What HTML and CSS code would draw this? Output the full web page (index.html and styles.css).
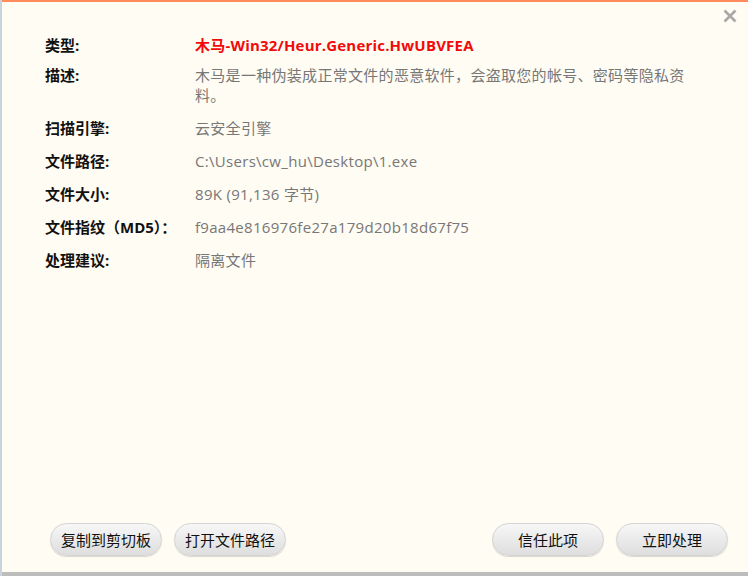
FILE: index.html
```html
<!DOCTYPE html>
<html lang="zh-CN">
<head>
    <meta charset="UTF-8">
    <title>病毒详情</title>
    <link rel="stylesheet" href="styles.css">
</head>
<body>
    <div class="dialog">
        <div class="titlebar">
            <svg class="close" width="14" height="14" viewBox="0 0 14 14">
                <path d="M1.5 1.5 L12.5 12.5 M12.5 1.5 L1.5 12.5" stroke="#a8a8a8" stroke-width="2.6" fill="none"/>
            </svg>
        </div>

        <!-- 详情列表 -->
        <div class="details">
            <div class="item first">
                <div class="label">类型:</div>
                <div class="value danger">木马-Win32/Heur.Generic.HwUBVFEA</div>
            </div>
            <div class="item desc">
                <div class="label">描述:</div>
                <div class="value">木马是一种伪装成正常文件的恶意软件，会盗取您的帐号、密码等隐私资料。</div>
            </div>
            <div class="item">
                <div class="label">扫描引擎:</div>
                <div class="value">云安全引擎</div>
            </div>
            <div class="item">
                <div class="label">文件路径:</div>
                <div class="value">C:\Users\cw_hu\Desktop\1.exe</div>
            </div>
            <div class="item">
                <div class="label">文件大小:</div>
                <div class="value">89K (91,136 字节)</div>
            </div>
            <div class="item">
                <div class="label">文件指纹（MD5）：</div>
                <div class="value">f9aa4e816976fe27a179d20b18d67f75</div>
            </div>
            <div class="item">
                <div class="label">处理建议:</div>
                <div class="value">隔离文件</div>
            </div>
        </div>

        <!-- 底部按钮 -->
        <div class="footer">
            <div class="group">
                <button>复制到剪切板</button>
                <button>打开文件路径</button>
            </div>
            <div class="group">
                <button>信任此项</button>
                <button>立即处理</button>
            </div>
        </div>
    </div>
</body>
</html>
```

FILE: styles.css
```css
html, body {
    margin: 0;
    padding: 0;
}

body {
    width: 748px;
    height: 576px;
    background: #c9d3dd;
    font-family: "Open Sans", "Noto Sans CJK SC", sans-serif;
    overflow: hidden;
}

.dialog {
    box-sizing: border-box;
    margin-left: 2px;
    width: 746px;
    height: 572px;
    background: #fffcf3;
    border-top: 2px solid #ff8a5c;
    display: flex;
    flex-direction: column;
    box-shadow: 0 4px 0 #bdbdbd;
}

.titlebar {
    height: 24px;
    display: flex;
    justify-content: flex-end;
    align-items: flex-start;
    padding: 7px 11px 0 0;
    box-sizing: border-box;
}

.details {
    padding: 9px 0 0 43px;
    flex: 1;
}

.item {
    display: flex;
    margin-top: 13px;
    font-size: 15px;
    line-height: 20px;
}

.item.first {
    margin-top: 0;
}

.item.desc {
    margin-top: 10px;
}

.label {
    width: 150px;
    flex-shrink: 0;
    color: #111;
    font-weight: bold;
}

.value {
    width: 496px;
    color: #777;
    letter-spacing: 0.3px;
}

.value.danger {
    color: #f20a0a;
    font-weight: bold;
    letter-spacing: 0.2px;
}

.footer {
    display: flex;
    justify-content: space-between;
    padding: 0 20px 16px 48px;
}

.group {
    display: flex;
    gap: 12px;
}

button {
    height: 33px;
    min-width: 111px;
    padding: 0 10px;
    font-family: "Noto Sans CJK SC", sans-serif;
    font-size: 15px;
    color: #111;
    border: 1px solid #d4d4d4;
    border-radius: 17px;
    background: linear-gradient(#f7f7f7, #e9e9e9 55%, #dedede);
    box-shadow: 0 1px 1px rgba(0, 0, 0, 0.15);
}

.footer .group:last-child button {
    min-width: 112px;
}
```
